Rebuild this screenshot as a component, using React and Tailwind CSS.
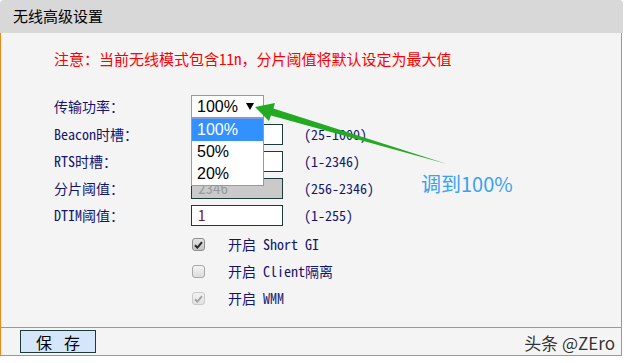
import React from 'react';

const mono = "[font-family:'Noto_Sans_Mono_CJK_SC','Noto_Sans_CJK_SC',monospace]";
const sans = "[font-family:'Liberation_Sans',Arial,sans-serif]";
const navy = 'text-[#14146e]';

// Beacon / RTS values sit under the open dropdown, so they are left empty
const rows = [
    { label: 'Beacon时槽：', value: '', range: '(25-1000)' },
    { label: 'RTS时槽：', value: '', range: '(1-2346)' },
    { label: '分片阈值：', value: '2346', range: '(256-2346)', disabled: true },
    { label: 'DTIM阈值：', value: '1', range: '(1-255)' },
];

const checks = [
    { label: '开启 Short GI', state: 'checked' },
    { label: '开启 Client隔离', state: 'off' },
    { label: '开启 WMM', state: 'disabled' },
];

const CheckBox = ({ state }) => {
    const box =
        state === 'checked'
            ? 'border-[#8e8e8e] bg-gradient-to-b from-[#e4e4e4] to-[#c4c4c4]'
            : state === 'disabled'
            ? 'border-[#c9c9c9] bg-gradient-to-b from-[#f2f2f2] to-[#e2e2e2]'
            : 'border-[#a8a8a8] bg-gradient-to-b from-[#f4f4f4] to-[#dcdcdc]';
    return (
        <span className={`ml-[1px] flex h-[13px] w-[13px] items-center justify-center rounded-[3px] border ${box}`}>
            {state !== 'off' && (
                <svg width="9" height="8" viewBox="0 0 9 8">
                    <path
                        d="M1 4.2 L3.4 6.6 L8 1.2"
                        fill="none"
                        stroke={state === 'checked' ? '#2a2a2a' : '#a4a4a4'}
                        strokeWidth="2"
                    />
                </svg>
            )}
        </span>
    );
};

const App = () => {
    return (
        <div className="relative h-[363px] w-[626px] overflow-hidden bg-white">
            <div className={`flex h-[33px] w-[623px] items-center rounded-t-[4px] bg-[#d8d8d8] pl-[13px] text-[15px] text-black ${mono}`}>
                无线高级设置
            </div>

            <div className="w-[622px] border-x border-b border-[#e8891c] bg-[#f4f4f4]">
                <div className="h-[294px] pl-[53px] pt-[16px]">
                    <p className={`h-[20px] text-[15px] leading-[20px] text-[#ff0000] ${mono}`}>
                        注意：当前无线模式包含11n，分片阈值将默认设定为最大值
                    </p>

                    <div className="mt-[26px] flex h-[23px] items-center">
                        <span className={`w-[137px] text-[14px] ${navy} ${mono}`}>传输功率：</span>
                        <div className="relative">
                            <div className={`flex h-[23px] w-[73px] items-center justify-between border border-[#7d9be0] bg-white pl-[5px] pr-[9px] text-[16px] text-black ${sans}`}>
                                <span>100%</span>
                                <span className="h-0 w-0 border-x-[4px] border-t-[7px] border-x-transparent border-t-black" />
                            </div>
                            <ul className={`absolute left-0 top-[23px] z-10 w-[73px] border border-[#7d9be0] bg-white text-[16px] text-black ${sans}`}>
                                <li className="flex h-[22px] items-center bg-[#3390ff] pl-[5px] text-white">100%</li>
                                <li className="flex h-[22px] items-center pl-[5px]">50%</li>
                                <li className="flex h-[22px] items-center pl-[5px]">20%</li>
                            </ul>
                        </div>
                    </div>

                    <div className="mt-[3px]">
                        {rows.map((r) => (
                            <div key={r.label} className="flex h-[27px] items-center">
                                <span className={`w-[137px] text-[14px] ${navy} ${mono}`}>{r.label}</span>
                                <div
                                    className={`flex h-[21px] w-[92px] items-center border border-[#1c3a3a] pl-[6px] text-[15px] ${mono} ${
                                        r.disabled ? 'bg-[#cacaca] text-[#9a9a9a]' : 'bg-white text-[#6b1b4b]'
                                    }`}
                                >
                                    {r.value}
                                </div>
                                <span className={`ml-[21px] text-[14px] ${navy} ${mono}`}>{r.range}</span>
                            </div>
                        ))}
                    </div>

                    <div className="mt-[2px]">
                        {checks.map((c) => (
                            <div key={c.label} className="flex h-[27px] items-center pl-[137px]">
                                <CheckBox state={c.state} />
                                <span className={`ml-[23px] text-[14px] ${navy} ${mono}`}>{c.label}</span>
                            </div>
                        ))}
                    </div>
                </div>

                <div className="flex h-[28px] items-start justify-between border-t border-[#e8891c] pl-[19px] pr-[6px]">
                    <button
                        className={`mt-[2px] h-[23px] w-[76px] border border-[#1c3a3a] bg-[#d5e6fb] text-[16px] leading-none tracking-[12px] text-black indent-[12px] ${mono}`}
                    >
                        保存
                    </button>
                    <span className="mt-[4px] text-[17px] leading-[22px] text-[#333] [font-family:'Noto_Sans_CJK_SC',sans-serif] [text-shadow:0_0_2px_#fff,0_0_1px_#fff]">
                        头条 @ZEro
                    </span>
                </div>
            </div>

            {/* annotation overlay */}
            <svg className="pointer-events-none absolute left-0 top-0" width="626" height="363">
                <polygon
                    points="255,107 275,103 273.4,108.6 447,164 271,115.6 269,121"
                    fill="#22aa22"
                />
            </svg>
            <span className="absolute left-[421px] top-[171px] text-[20px] leading-[26px] text-[#3aa2f0] [font-family:'Noto_Sans_CJK_SC',sans-serif]">
                调到100%
            </span>
        </div>
    );
};

export default App;
